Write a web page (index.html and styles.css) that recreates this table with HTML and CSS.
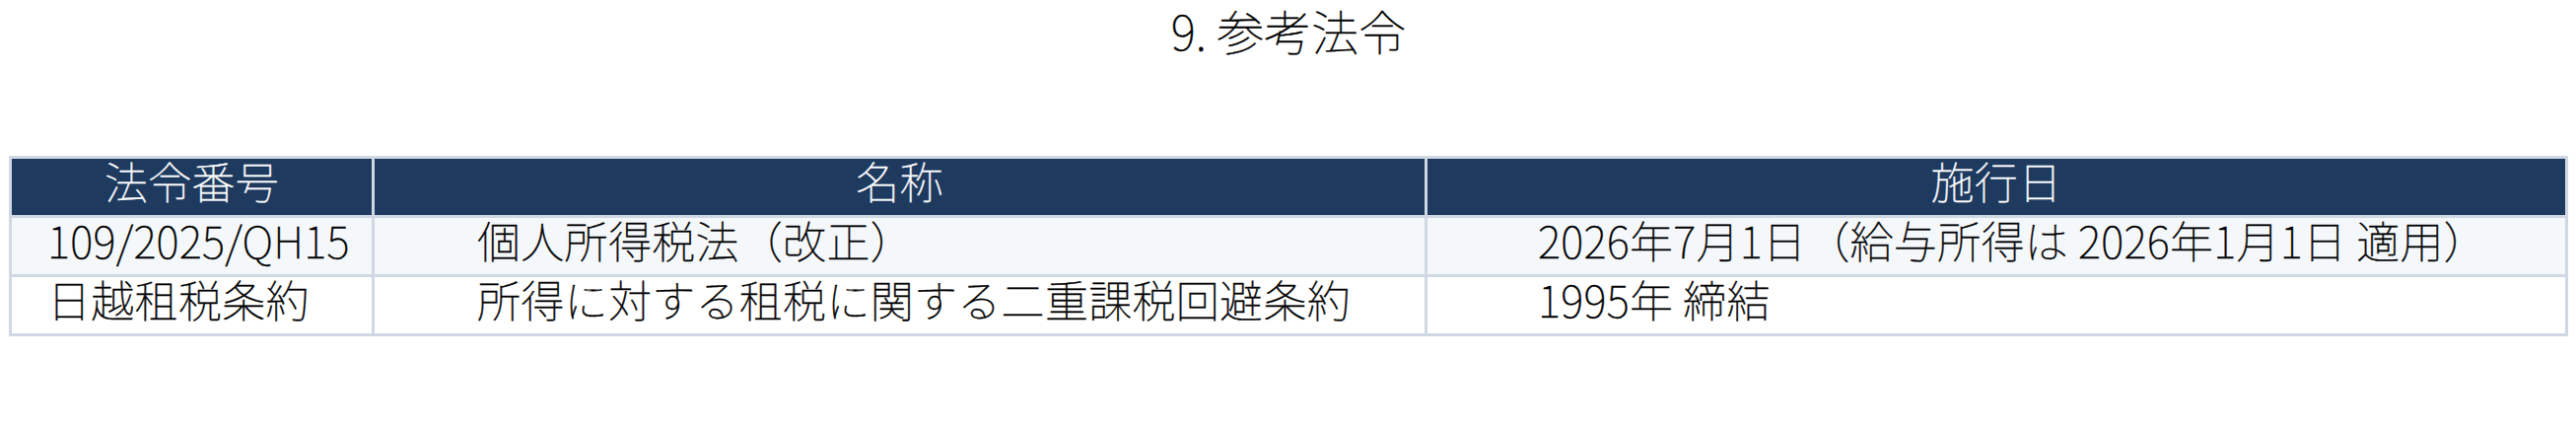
FILE: index.html
```html
<!DOCTYPE html>
<html lang="ja">
<head>
<meta charset="utf-8">
<title>9. 参考法令</title>
<link rel="stylesheet" href="styles.css">
</head>
<body>
<div class="page">
  <h1 class="title">9. 参考法令</h1>
  <div class="law-table" role="table">
    <div class="cell head" role="columnheader">法令番号</div>
    <div class="cell head" role="columnheader">名称</div>
    <div class="cell head" role="columnheader">施行日</div>

    <div class="cell odd c1" role="cell">109/2025/QH15</div>
    <div class="cell odd c2" role="cell">個人所得税法（改正）</div>
    <div class="cell odd c3" role="cell">2026年7月1日（給与所得は 2026年1月1日 適用）</div>

    <div class="cell even c1" role="cell">日越租税条約</div>
    <div class="cell even c2" role="cell">所得に対する租税に関する二重課税回避条約</div>
    <div class="cell even c3" role="cell">1995年 締結</div>
  </div>
</div>
</body>
</html>
```
FILE: styles.css
```css
html, body {
  margin: 0;
  padding: 0;
  background: #ffffff;
}

.page {
  padding: 6px 8px 0 9px;
  font-family: "Noto Sans CJK JP", "Noto Sans", sans-serif;
  font-weight: 100;
  color: #000000;
  -webkit-text-stroke: 0.45px #000000;
}

.title {
  margin: 0;
  font-size: 48px;
  line-height: 48px;
  font-weight: 100;
  text-align: center;
  color: #000000;
}

.law-table {
  margin-top: 104px;
  display: grid;
  grid-template-columns: 365px 1065px 1154px;
  grid-auto-rows: 57px;
  gap: 3px;
  padding: 3px;
  background: #cfd8e3;
  width: max-content;
}

.cell {
  font-size: 44px;
  line-height: 44px;
  letter-spacing: 0.3px;
  padding-top: 0;
  white-space: nowrap;
}

.head {
  background: #1e3a5f;
  color: #ffffff;
  -webkit-text-stroke: 0.45px #ffffff;
  text-align: center;
}

.odd {
  background: #f5f8fb;
}

.even {
  background: #ffffff;
}

.c1 { padding-left: 36px; }
.c2 { padding-left: 104px; }
.c3 { padding-left: 112px; }
```
